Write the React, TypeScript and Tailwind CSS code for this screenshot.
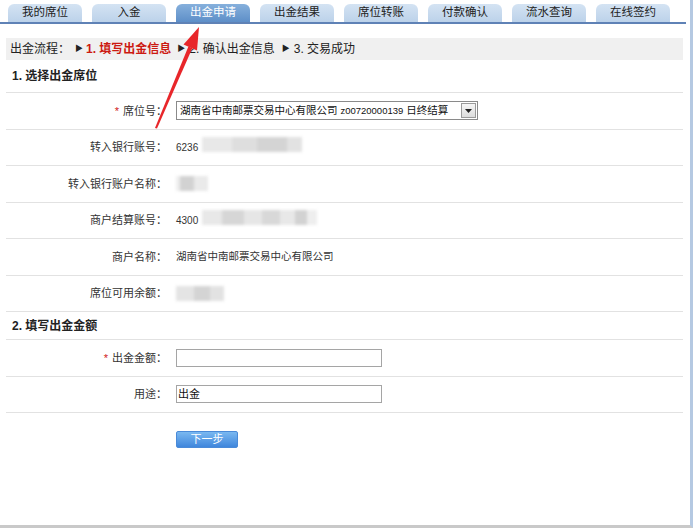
import React from "react";

const tabs = ["我的席位", "入金", "出金申请", "出金结果", "席位转账", "付款确认", "流水查询", "在线签约"];

function Blur({ segs }: { segs: [number, string][] }) {
  return (
    <span className="inline-flex h-[15px] blur-[1.5px]">
      {segs.map(([w, c], i) => (
        <span key={i} style={{ width: w, background: c }} className="h-full" />
      ))}
    </span>
  );
}

function Row({ label, star, children }: { label: string; star?: boolean; children?: React.ReactNode }) {
  return (
    <div className="flex h-[36.5px] items-center border-b border-[#e2e2e2]">
      <div className="w-[161px] shrink-0 text-right text-[11px] text-[#333]">
        {star && <span className="mr-[4px] text-[#d02020]">*</span>}
        {label}：
      </div>
      <div className="ml-[9px] flex items-center text-[10.5px] text-[#333]">{children}</div>
    </div>
  );
}

export default function App() {
  return (
    <div
      className="relative h-[528px] w-[693px] overflow-hidden border-b-[3px] border-r-[3px] border-b-[#c9c9c9] border-r-[#b5c9e2] bg-white"
      style={{ fontFamily: '"Liberation Sans", "Noto Sans CJK SC", sans-serif' }}
    >
      {/* tabs */}
      <div className="mr-[4px] flex gap-[10px] border-b-2 border-[#5f82b6] pl-[8px] pt-[4px]">
        {tabs.map((t, i) => (
          <div
            key={t}
            className={
              "flex h-[18px] w-[74px] items-center justify-center rounded-t-[6px] text-[11.5px] " +
              (i === 2
                ? "bg-gradient-to-b from-[#86b0dc] to-[#5e8fc8] text-white"
                : "bg-gradient-to-b from-[#d4e3f3] to-[#bcd2ea] text-[#222]")
            }
          >
            {t}
          </div>
        ))}
      </div>

      <div className="mr-[1px] px-[6px]">
        {/* breadcrumb */}
        <div className="mt-[14px] flex h-[22px] items-center bg-[#f0f0f0] pl-[4px] text-[12px] text-[#222]">
          <span>出金流程：</span>
          <span className="ml-[5px] text-[8px]">▶</span>
          <span className="ml-[3px] font-bold text-[#cc1a12]">1. 填写出金信息</span>
          <span className="ml-[6px] text-[8px]">▶</span>
          <span className="ml-[4px]">2. 确认出金信息</span>
          <span className="ml-[7px] text-[8px]">▶</span>
          <span className="ml-[4px]">3. 交易成功</span>
        </div>

        {/* section 1 */}
        <div className="flex h-[33px] items-center border-b border-[#e2e2e2] pl-[6px] text-[12px] font-bold text-[#222]">
          1. 选择出金席位
        </div>
        <Row label="席位号" star>
          <div className="flex h-[19px] w-[302px] items-center border border-[#8a8a8a] bg-white pl-[3px] text-[10.5px] text-[#111]">
            <span className="flex-1 whitespace-nowrap">
              湖南省中南邮票交易中心有限公司 <span className="text-[9.5px]">z00720000139</span> 日终结算
            </span>
            <span className="mr-[1px] flex h-[15px] w-[15px] items-center justify-center border border-[#9a9a9a] bg-gradient-to-b from-[#f6f6f6] to-[#dcdcdc]">
              <svg width="7" height="4" viewBox="0 0 7 4"><path d="M0 0h7L3.5 4z" fill="#222" /></svg>
            </span>
          </div>
        </Row>
        <Row label="转入银行账号">
          <span className="text-[10px]">6236</span>
          <span className="ml-[4px]">
            <Blur segs={[[30, "#e8e8e8"], [25, "#dedede"], [30, "#d4d4d4"], [15, "#e2e2e2"]]} />
          </span>
        </Row>
        <Row label="转入银行账户名称">
          <Blur segs={[[4, "#eeeeee"], [14, "#d2d2d2"], [14, "#eaeaea"]]} />
        </Row>
        <Row label="商户结算账号">
          <span className="text-[10px]">4300</span>
          <span className="ml-[4px]">
            <Blur segs={[[20, "#e8e8e8"], [22, "#d6d6d6"], [18, "#e6e6e6"], [18, "#d8d8d8"], [15, "#e8e8e8"], [12, "#d2d2d2"], [10, "#eeeeee"]]} />
          </span>
        </Row>
        <Row label="商户名称">湖南省中南邮票交易中心有限公司</Row>
        <Row label="席位可用余额">
          <Blur segs={[[18, "#e4e4e4"], [16, "#d4d4d4"], [14, "#e2e2e2"]]} />
        </Row>

        {/* section 2 */}
        <div className="flex h-[28px] items-center border-b border-[#e2e2e2] pl-[6px] text-[12px] font-bold text-[#222]">
          2. 填写出金金额
        </div>
        <Row label="出金金额" star>
          <div className="h-[18px] w-[206px] border border-[#a5a5a5] bg-white" />
        </Row>
        <Row label="用途">
          <div className="flex h-[18px] w-[206px] items-center border border-[#a5a5a5] bg-white pl-[1px] text-[11px] text-[#111]">出金</div>
        </Row>

        <div className="ml-[170px] mt-[18px]">
          <div className="flex h-[17px] w-[62px] items-center justify-center rounded-[2px] border border-[#4a8ad8] bg-gradient-to-b from-[#7ab8f0] to-[#3f86dc] text-[11px] text-white">
            下一步
          </div>
        </div>
      </div>

      {/* red arrow annotation */}
      <svg className="pointer-events-none absolute left-0 top-0" width="693" height="528">
        <polygon points="155,128 157,128.5 192.4,48 188.4,46.4" fill="#e8262a" />
        <polygon points="199,27 197,50.5 183.5,44.5" fill="#e8262a" />
      </svg>
    </div>
  );
}
